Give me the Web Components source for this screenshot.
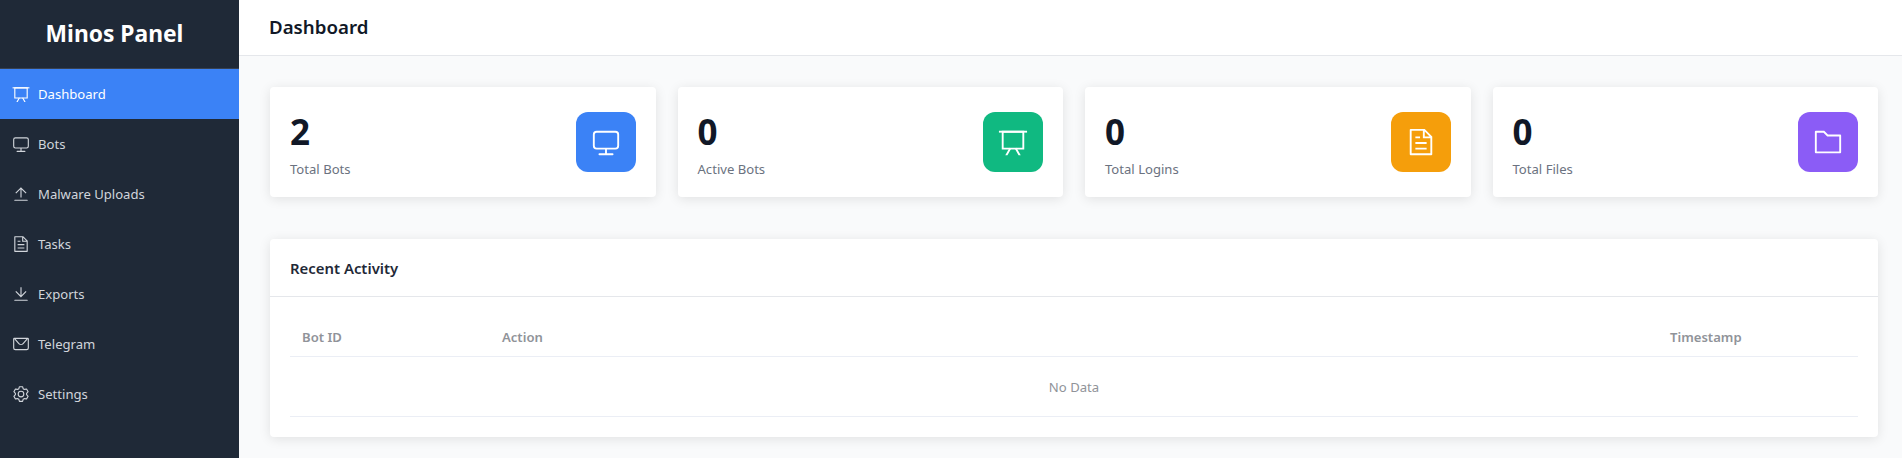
<!doctype html>
<html>
    <head>
        <title>Minos Panel</title>
        <style>
        html, body {
            margin: 0;
            height: 100%;
            overflow: hidden;
        }

        body {
            display: flex;
            background-color: #f9fafb;
            color: #111827;
            font-family: "Noto Sans", "Open Sans", sans-serif;
        }

        #main {
            flex: 1;
            min-width: 0;
            display: flex;
            flex-direction: column;
        }

        #content {
            padding: 31px 24px 0 31px;
            display: flex;
            flex-direction: column;
            gap: 42px;
        }

        #stats {
            display: grid;
            grid-template-columns: repeat(4, 1fr);
            gap: 22px;
        }
        </style>
    </head>
    <body>
        <side-bar>
            <nav-item icon="data-board" active>Dashboard</nav-item>
            <nav-item icon="monitor">Bots</nav-item>
            <nav-item icon="upload">Malware Uploads</nav-item>
            <nav-item icon="document">Tasks</nav-item>
            <nav-item icon="download">Exports</nav-item>
            <nav-item icon="message">Telegram</nav-item>
            <nav-item icon="setting">Settings</nav-item>
        </side-bar>
        <div id="main">
            <top-bar>Dashboard</top-bar>
            <div id="content">
                <div id="stats">
                    <stat-card value="2" icon="monitor" color="#3b82f6">Total Bots</stat-card>
                    <stat-card value="0" icon="data-board" color="#10b981">Active Bots</stat-card>
                    <stat-card value="0" icon="document" color="#f59e0b">Total Logins</stat-card>
                    <stat-card value="0" icon="folder" color="#8b5cf6">Total Files</stat-card>
                </div>
                <activity-card>Recent Activity</activity-card>
            </div>
        </div>

        <script>
            const ICONS = {
                "monitor": ["M544 768v128h192a32 32 0 1 1 0 64H288a32 32 0 1 1 0-64h192V768H192A128 128 0 0 1 64 640V256a128 128 0 0 1 128-128h640a128 128 0 0 1 128 128v384a128 128 0 0 1-128 128H544zM192 192a64 64 0 0 0-64 64v384a64 64 0 0 0 64 64h640a64 64 0 0 0 64-64V256a64 64 0 0 0-64-64H192z"],
                "data-board": ["M32 128h960v64H32z", "M192 192v512h640V192H192zm-64-64h768v640H128V128z", "M322.176 960H248.32l144.64-250.56 55.424 32L322.176 960zm453.888 0h-73.856L576 741.44l55.424-32L776.064 960z"],
                "upload": ["M160 832h704a32 32 0 1 1 0 64H160a32 32 0 1 1 0-64zm384-578.304V704h-64V247.296L237.248 490.048 192 444.8 508.8 128l316.8 316.8-45.312 45.248L544 253.696z"],
                "document": ["M832 384H576V128H192v768h640V384zm-26.496-64L640 154.496V320h165.504zM160 64h480l256 256v608a32 32 0 0 1-32 32H160a32 32 0 0 1-32-32V96a32 32 0 0 1 32-32zm160 448h384v64H320v-64zm0-192h160v64H320v-64zm0 384h384v64H320v-64z"],
                "download": ["M160 832h704a32 32 0 1 1 0 64H160a32 32 0 1 1 0-64zm384-253.696 236.288-236.352 45.248 45.248L508.8 704 192 387.2l45.248-45.248L480 584.704V128h64v450.304z"],
                "message": ["M128 224v512a64 64 0 0 0 64 64h640a64 64 0 0 0 64-64V224H128zm0-64h768a64 64 0 0 1 64 64v512a128 128 0 0 1-128 128H192A128 128 0 0 1 64 736V224a64 64 0 0 1 64-64z", "M904 224 656.512 506.88a192 192 0 0 1-289.024 0L120 224h784zm-698.944 0 210.56 240.704a128 128 0 0 0 192.704 0L818.944 224H205.056z"],
                "setting": ["M600.704 64a32 32 0 0 1 30.464 22.208l35.2 109.376c14.784 7.232 28.928 15.36 42.432 24.512l112.384-24.192a32 32 0 0 1 34.432 15.36L944.32 364.8a32 32 0 0 1-4.032 37.504l-77.12 85.12a357.12 357.12 0 0 1 0 49.024l77.12 85.248a32 32 0 0 1 4.032 37.504l-88.704 153.6a32 32 0 0 1-34.432 15.296L708.8 803.904c-13.44 9.088-27.648 17.28-42.368 24.512l-35.264 109.376A32 32 0 0 1 600.704 960H423.296a32 32 0 0 1-30.464-22.208L357.696 828.48a351.616 351.616 0 0 1-42.56-24.64l-112.32 24.256a32 32 0 0 1-34.432-15.36L79.68 659.2a32 32 0 0 1 4.032-37.504l77.12-85.248a357.12 357.12 0 0 1 0-48.896l-77.12-85.248A32 32 0 0 1 79.68 364.8l88.704-153.6a32 32 0 0 1 34.432-15.296l112.32 24.256c13.568-9.152 27.776-17.408 42.56-24.64l35.2-109.312A32 32 0 0 1 423.232 64H600.64zm-23.424 64H446.72l-36.352 113.088-24.512 11.968a294.113 294.113 0 0 0-34.816 20.096l-22.656 15.36-116.224-25.088-65.28 113.152 79.68 88.192-1.92 27.136a293.12 293.12 0 0 0 0 40.192l1.92 27.136-79.808 88.192 65.344 113.152 116.224-25.024 22.656 15.296a294.113 294.113 0 0 0 34.816 20.096l24.512 11.968L446.72 896h130.688l36.48-113.152 24.448-11.904a288.282 288.282 0 0 0 34.752-20.096l22.592-15.296 116.288 25.024 65.28-113.152-79.744-88.192 1.92-27.136a293.12 293.12 0 0 0 0-40.256l-1.92-27.136 79.808-88.128-65.344-113.152-116.288 24.96-22.592-15.232a287.616 287.616 0 0 0-34.752-20.096l-24.448-11.904L577.344 128zM512 320a192 192 0 1 1 0 384 192 192 0 0 1 0-384zm0 64a128 128 0 1 0 0 256 128 128 0 0 0 0-256z"],
                "folder": ["M128 192v640h768V320H485.76L357.504 192H128zm-32-64h287.872l128.384 128H928a32 32 0 0 1 32 32v576a32 32 0 0 1-32 32H96a32 32 0 0 1-32-32V160a32 32 0 0 1 32-32z"],
            }

            function iconSvg(name) {
                const paths = ICONS[name].map(d => `<path fill="currentColor" d="${d}"/>`).join("")
                return `<svg viewBox="0 0 1024 1024" xmlns="http://www.w3.org/2000/svg">${paths}</svg>`
            }

            class SideBar extends HTMLElement {
                constructor() {
                    super()
                    this.attachShadow({ mode: "open" }).innerHTML = `
                        <style>
                        :host {
                            display: block;
                            flex: none;
                            width: 239px;
                            height: 100%;
                            background-color: #1f2937;
                        }
                        #brand {
                            box-sizing: border-box;
                            height: 69px;
                            padding: 0 10px 2px 0;
                            border-bottom: 1px solid #374151;
                            display: flex;
                            align-items: center;
                            justify-content: center;
                            color: #fff;
                            font-size: 22.8px;
                            font-weight: 700;
                        }
                        </style>
                        <div id="brand">Minos Panel</div>
                        <slot></slot>
                    `
                }
            }

            class NavItem extends HTMLElement {
                constructor() {
                    super()
                    this.attachShadow({ mode: "open" }).innerHTML = `
                        <style>
                        :host {
                            display: flex;
                            align-items: center;
                            gap: 8px;
                            height: 50px;
                            padding-left: 12px;
                            color: #d1d5db;
                            font-size: 13.1px;
                        }
                        :host([active]) {
                            background-color: #3b82f6;
                            color: #fff;
                        }
                        svg {
                            width: 18px;
                            height: 18px;
                            flex: none;
                        }
                        </style>
                        ${iconSvg(this.getAttribute("icon"))}
                        <slot></slot>
                    `
                }
            }

            class TopBar extends HTMLElement {
                constructor() {
                    super()
                    this.attachShadow({ mode: "open" }).innerHTML = `
                        <style>
                        :host {
                            display: flex;
                            align-items: center;
                            box-sizing: border-box;
                            height: 56px;
                            padding: 0 0 2px 30px;
                            background-color: #fff;
                            border-bottom: 1px solid #e5e7eb;
                            font-size: 18.7px;
                            font-weight: 600;
                            color: #111827;
                        }
                        </style>
                        <slot></slot>
                    `
                }
            }

            class StatCard extends HTMLElement {
                constructor() {
                    super()
                    this.attachShadow({ mode: "open" }).innerHTML = `
                        <style>
                        :host {
                            display: flex;
                            align-items: center;
                            justify-content: space-between;
                            box-sizing: border-box;
                            height: 110px;
                            padding: 0 20px;
                            background-color: #fff;
                            border-radius: 4px;
                            box-shadow: 0 2px 12px rgba(0, 0, 0, 0.1);
                        }
                        #text {
                            padding-top: 5px;
                        }
                        #value {
                            font-size: 35px;
                            font-weight: 700;
                            line-height: 44px;
                            color: #111827;
                        }
                        #label {
                            margin-top: 5px;
                            font-size: 13.1px;
                            line-height: 20px;
                            color: #6b7280;
                        }
                        #tile {
                            width: 60px;
                            height: 60px;
                            border-radius: 12px;
                            display: flex;
                            align-items: center;
                            justify-content: center;
                            color: #fff;
                            background-color: ${this.getAttribute("color")};
                        }
                        svg {
                            width: 30px;
                            height: 30px;
                        }
                        </style>
                        <div id="text">
                            <div id="value">${this.getAttribute("value")}</div>
                            <div id="label"><slot></slot></div>
                        </div>
                        <div id="tile">${iconSvg(this.getAttribute("icon"))}</div>
                    `
                }
            }

            class ActivityCard extends HTMLElement {
                constructor() {
                    super()
                    this.attachShadow({ mode: "open" }).innerHTML = `
                        <style>
                        :host {
                            display: block;
                            background-color: #fff;
                            border-radius: 4px;
                            box-shadow: 0 2px 12px rgba(0, 0, 0, 0.1);
                        }
                        #head {
                            height: 58px;
                            box-sizing: border-box;
                            display: flex;
                            align-items: center;
                            padding: 0 20px;
                            border-bottom: 1px solid #e5e7eb;
                            font-size: 14.9px;
                            font-weight: 600;
                            color: #1f2937;
                        }
                        #body {
                            padding: 20px;
                        }
                        table {
                            width: 100%;
                            border-collapse: separate;
                            border-spacing: 0;
                            table-layout: fixed;
                            font-size: 13.1px;
                        }
                        th {
                            box-sizing: border-box;
                            height: 40px;
                            padding: 0 12px;
                            text-align: left;
                            font-weight: 600;
                            color: #909399;
                            border-bottom: 1px solid #ebeef5;
                        }
                        td {
                            box-sizing: border-box;
                            height: 60px;
                            padding: 0;
                            text-align: center;
                            color: #909399;
                            border-bottom: 1px solid #ebeef5;
                        }
                        .side {
                            width: 200px;
                        }
                        </style>
                        <div id="head"><slot></slot></div>
                        <div id="body">
                            <table>
                                <thead>
                                    <tr>
                                        <th class="side">Bot ID</th>
                                        <th>Action</th>
                                        <th class="side">Timestamp</th>
                                    </tr>
                                </thead>
                                <tbody>
                                    <tr><td colspan="3">No Data</td></tr>
                                </tbody>
                            </table>
                        </div>
                    `
                }
            }

            customElements.define("side-bar", SideBar)
            customElements.define("nav-item", NavItem)
            customElements.define("top-bar", TopBar)
            customElements.define("stat-card", StatCard)
            customElements.define("activity-card", ActivityCard)
        </script>
    </body>
</html>
